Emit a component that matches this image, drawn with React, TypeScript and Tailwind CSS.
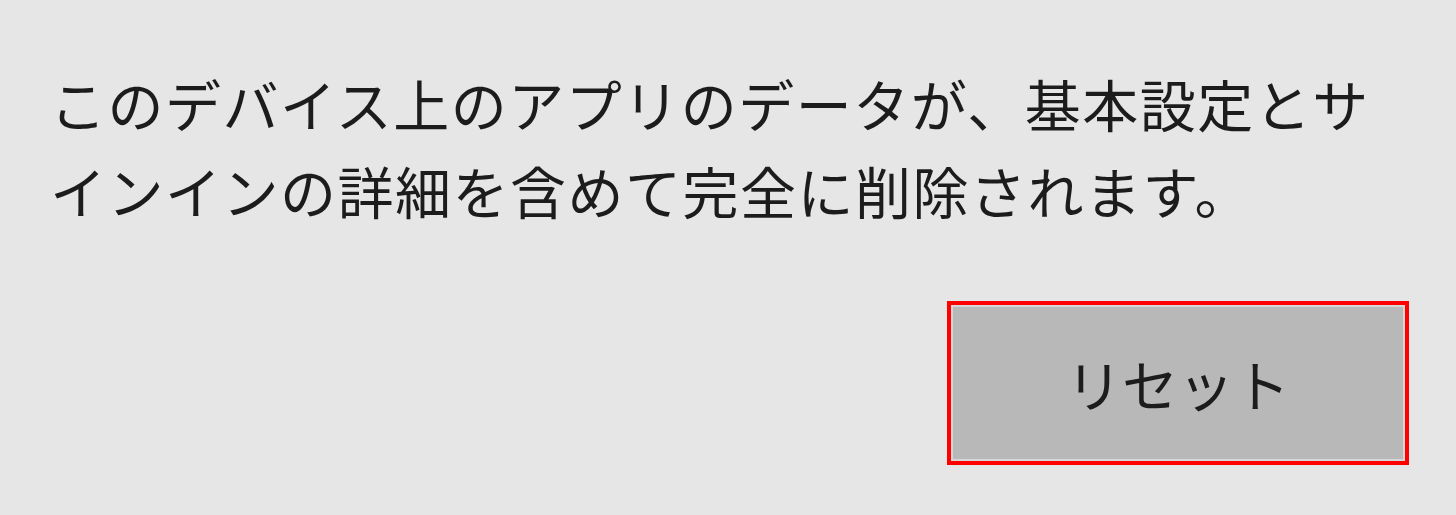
import React from 'react';

export default function App() {
  return (
    <div
      className="h-[515px] w-full bg-[#e6e6e6] pl-[50px] pr-[47px] pt-[59px] text-[#1c1c1c]"
      style={{ fontFamily: '"Noto Sans CJK JP", "Noto Sans", sans-serif' }}
    >
      {/* Warning text */}
      <p className="whitespace-nowrap text-[56px] leading-[87px] tracking-[1.5px]">
        このデバイス上のアプリのデータが、基本設定とサ
        <br />
        インインの詳細を含めて完全に削除されます。
      </p>

      {/* Reset button, highlighted */}
      <div className="mt-[68px] flex justify-end">
        <div className="border-4 border-[#ff0000] bg-[#d6d6d6] p-[2px]">
          <button className="flex h-[152px] w-[450px] items-center justify-center bg-[#b8b8b8] text-[56px] text-[#1c1c1c]">
            リセット
          </button>
        </div>
      </div>
    </div>
  );
}
